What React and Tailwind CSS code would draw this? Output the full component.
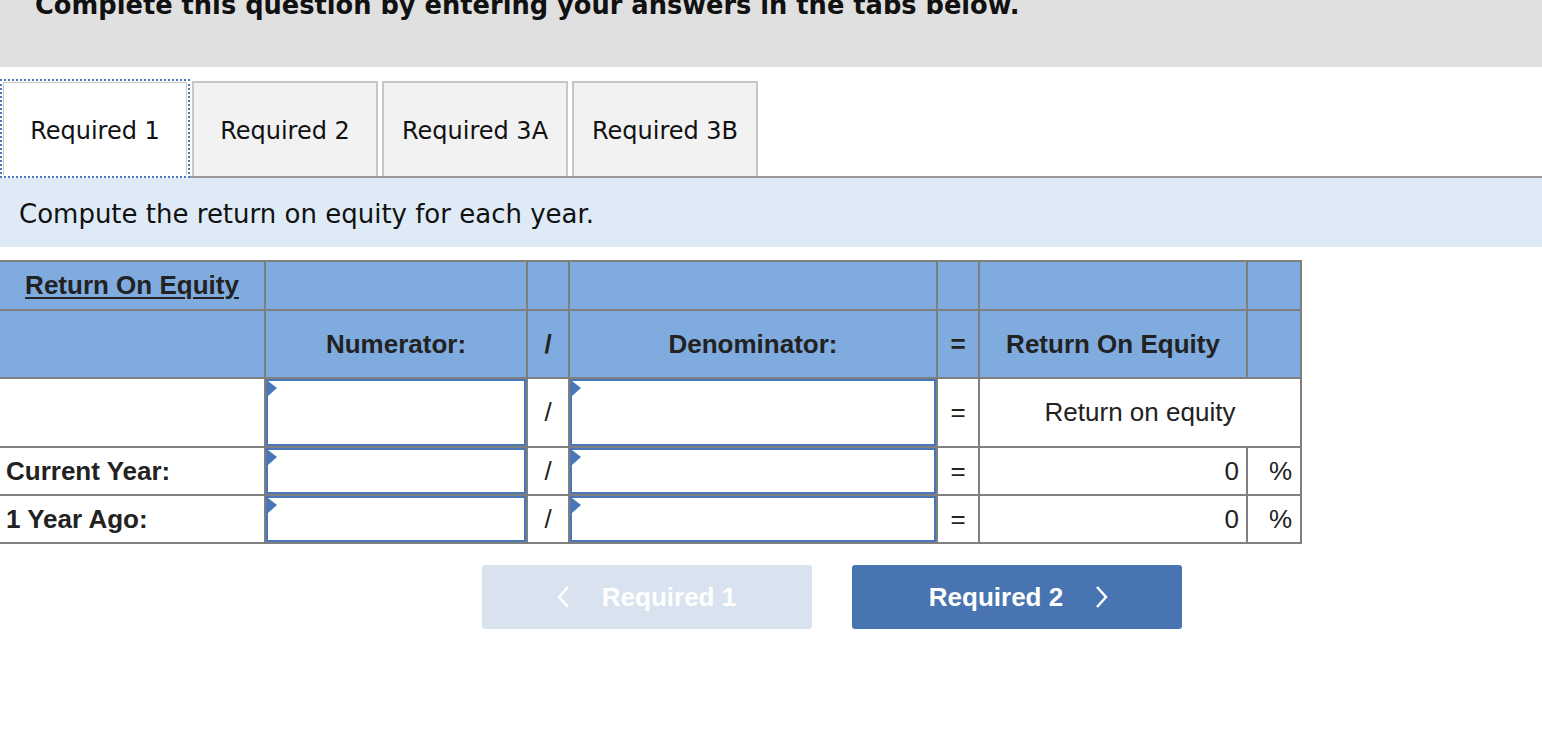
import React from 'react';

function Marker() {
  return (
    <svg className="absolute left-0 top-0" width="9" height="15" viewBox="0 0 9 15">
      <polygon points="0,0 9,7 0,15" fill="#4a77b8" />
    </svg>
  );
}

function InputCell() {
  return (
    <td className="p-0 border-2 border-[#7f7f7f] h-px">
      <div className="relative h-full border-2 border-[#4a77b8] bg-white">
        <Marker />
      </div>
    </td>
  );
}

const cell = "border-2 border-[#7f7f7f]";

function App() {
  const tabs = ["Required 2", "Required 3A", "Required 3B"];

  return (
    <div className="w-[1542px] h-[738px] bg-white overflow-hidden">
      {/* top banner, cut off at top */}
      <div className="h-[67px] bg-[#e0e0e0] overflow-hidden">
        <p className="-mt-[7px] pl-[35px] text-[25.7px] leading-[24px] font-bold text-[#111] font-['DejaVu_Sans',sans-serif]">
          Complete this question by entering your answers in the tabs below.
        </p>
      </div>

      {/* tabs */}
      <div className="flex items-end mt-[12px] font-['DejaVu_Sans',sans-serif] text-[24px] text-[#111]">
        <div className="w-[190px] h-[99px] border-2 border-dotted border-[#4b78be] p-[1px]">
          <div className="h-full border border-[#c8c8c8] border-b-0 bg-white flex items-center justify-center pt-[4px]">
            Required 1
          </div>
        </div>
        <div className="flex-1 flex items-end gap-[4px] pl-[2px] border-b-2 border-[#9a9a9a]">
          {tabs.map((t) => (
            <div key={t} className="w-[186px] h-[95px] border-2 border-b-0 border-[#c6c6c6] bg-[#f2f2f2] flex items-center justify-center pt-[2px]">
              {t}
            </div>
          ))}
        </div>
      </div>

      {/* instruction */}
      <div className="h-[69px] bg-[#deebf7] flex items-center pl-[19px] pt-[3px] font-['DejaVu_Sans',sans-serif] text-[26px] text-[#111]">
        Compute the return on equity for each year.
      </div>

      {/* table */}
      <div className="mt-[13px]">
        <table className="border-collapse table-fixed w-[1301px] font-['Liberation_Sans',Arial,sans-serif] text-[26px] text-[#222]">
          <colgroup>
            <col className="w-[265px]" />
            <col className="w-[262px]" />
            <col className="w-[42px]" />
            <col className="w-[368px]" />
            <col className="w-[42px]" />
            <col className="w-[268px]" />
            <col className="w-[54px]" />
          </colgroup>
          <tbody>
            <tr className="h-[49px] bg-[#80abdf]">
              <td className={`${cell} border-l-0 text-center font-bold`}>
                <span className="underline underline-offset-[3px] decoration-2">Return On Equity</span>
              </td>
              <td className={cell}></td>
              <td className={cell}></td>
              <td className={cell}></td>
              <td className={cell}></td>
              <td className={cell}></td>
              <td className={cell}></td>
            </tr>
            <tr className="h-[68px] bg-[#80abdf] font-bold">
              <td className={`${cell} border-l-0`}></td>
              <td className={`${cell} text-center`}>Numerator:</td>
              <td className={`${cell} text-center`}>/</td>
              <td className={`${cell} text-center`}>Denominator:</td>
              <td className={`${cell} text-center`}>=</td>
              <td className={`${cell} text-center`}>Return On Equity</td>
              <td className={cell}></td>
            </tr>
            <tr className="h-[69px]">
              <td className={`${cell} border-l-0`}></td>
              <InputCell />
              <td className={`${cell} text-center`}>/</td>
              <InputCell />
              <td className={`${cell} text-center`}>=</td>
              <td className={`${cell} text-center`} colSpan={2}>Return on equity</td>
            </tr>
            <tr className="h-[48px]">
              <td className={`${cell} border-l-0 font-bold pl-[6px]`}>Current Year:</td>
              <InputCell />
              <td className={`${cell} text-center`}>/</td>
              <InputCell />
              <td className={`${cell} text-center`}>=</td>
              <td className={`${cell} text-right pr-[7px]`}>0</td>
              <td className={`${cell} text-right pr-[8px]`}>%</td>
            </tr>
            <tr className="h-[48px]">
              <td className={`${cell} border-l-0 font-bold pl-[6px]`}>1 Year Ago:</td>
              <InputCell />
              <td className={`${cell} text-center`}>/</td>
              <InputCell />
              <td className={`${cell} text-center`}>=</td>
              <td className={`${cell} text-right pr-[7px]`}>0</td>
              <td className={`${cell} text-right pr-[8px]`}>%</td>
            </tr>
          </tbody>
        </table>
      </div>

      {/* nav buttons */}
      <div className="flex gap-[40px] pl-[482px] pt-[21px] font-['Liberation_Sans',Arial,sans-serif] font-bold text-[26px] text-white">
        <button className="w-[330px] h-[64px] rounded-[3px] bg-[#d9e3ef] flex items-center justify-center gap-[32px] pr-[2px]">
          <svg width="14" height="24" viewBox="0 0 14 24" fill="none" stroke="white" strokeWidth="2.5">
            <polyline points="12,2 3,12 12,22" />
          </svg>
          <span>Required 1</span>
        </button>
        <button className="w-[330px] h-[64px] rounded-[3px] bg-[#4874b2] flex items-center justify-center gap-[32px] pl-[4px]">
          <span>Required 2</span>
          <svg width="14" height="24" viewBox="0 0 14 24" fill="none" stroke="white" strokeWidth="2.5">
            <polyline points="2,2 11,12 2,22" />
          </svg>
        </button>
      </div>
    </div>
  );
}

export default App;
